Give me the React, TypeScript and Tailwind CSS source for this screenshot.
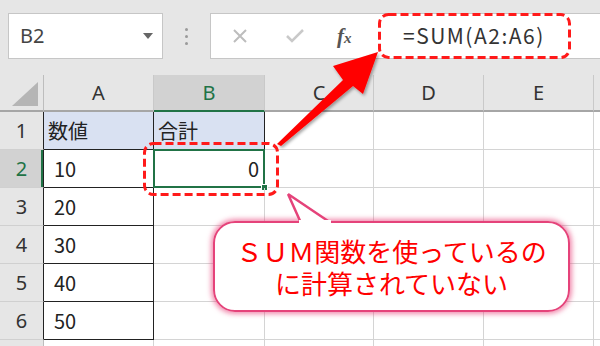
import React from "react";

const COLS = ["A", "B", "C", "D", "E"];
const WIDTHS = ["w-[110px]", "w-[111px]", "w-[109px]", "w-[110px]", "w-[110px]"];

const jp = { fontFamily: '"Noto Sans CJK JP", "Noto Sans", sans-serif' };

type Row = { n: number; a: string; b: string };

const rows: Row[] = [
  { n: 1, a: "数値", b: "合計" },
  { n: 2, a: "10", b: "0" },
  { n: 3, a: "20", b: "" },
  { n: 4, a: "30", b: "" },
  { n: 5, a: "40", b: "" },
  { n: 6, a: "50", b: "" },
  { n: 7, a: "", b: "" },
];

const Toolbar = () => (
  <div className="flex h-[75px] items-start bg-[#e6e6e6] pl-[8px] pt-[13px]">
    <div className="flex h-[46px] w-[155px] items-center justify-between border border-[#c6c6c6] bg-white pl-[11px] pr-[9px]">
      <span className="text-[20px] text-[#444]" style={{ fontFamily: '"Noto Sans", sans-serif' }}>B2</span>
      <svg width="10" height="6" viewBox="0 0 10 6">
        <path d="M0 0h10L5 6z" fill="#666" />
      </svg>
    </div>
    <div className="flex h-[46px] w-[47px] flex-col items-center justify-center gap-[4px]">
      <span className="h-[3px] w-[3px] rounded-full bg-[#9a9a9a]" />
      <span className="h-[3px] w-[3px] rounded-full bg-[#9a9a9a]" />
      <span className="h-[3px] w-[3px] rounded-full bg-[#9a9a9a]" />
    </div>
    <div className="flex h-[46px] flex-1 items-center border border-r-0 border-[#c6c6c6] bg-white">
      <div className="flex w-[168px] items-center">
        <svg className="ml-[21px]" width="16" height="16" viewBox="0 0 16 16">
          <path d="M2 2l12 12M14 2L2 14" stroke="#bdbdbd" strokeWidth="2" />
        </svg>
        <svg className="ml-[37px]" width="20" height="16" viewBox="0 0 20 16">
          <path d="M2 8l5 5L18 2" stroke="#c9c9c9" strokeWidth="2.5" fill="none" />
        </svg>
        <span
          className="ml-[32px] text-[21px] font-bold italic leading-none text-[#555]"
          style={{ fontFamily: '"Liberation Serif", serif' }}
        >
          f<span className="text-[15px]">x</span>
        </span>
      </div>
      <span className="pl-[24px] text-[21px] tracking-[1.5px] text-[#333]" style={jp}>
        =SUM(A2:A6)
      </span>
    </div>
  </div>
);

const Header = () => (
  <div className="flex h-[37px] bg-[#e6e6e6]">
    <div className="flex w-[44px] items-end justify-end border-r border-b-2 border-r-[#bdbdbd] border-b-[#a6a6a6] pb-[4px] pr-[5px]">
      <svg width="26" height="24" viewBox="0 0 26 24">
        <path d="M26 0v24H0z" fill="#b5b5b5" />
      </svg>
    </div>
    {COLS.map((c, i) => (
      <div
        key={c}
        className={`${WIDTHS[i]} flex items-center justify-center border-r border-b-2 border-r-[#c9c9c9] text-[20px] ${
          c === "B" ? "border-b-[#217346] bg-[#d2d2d2] text-[#217346]" : "border-b-[#a6a6a6] text-[#333]"
        }`}
        style={{ fontFamily: '"Noto Sans", sans-serif' }}
      >
        {c}
      </div>
    ))}
    <div className="flex-1 border-b-2 border-b-[#a6a6a6]" />
  </div>
);

const GridRow = ({ r }: { r: Row }) => {
  const sel = r.n === 2;
  const inTable = r.n <= 6;
  return (
    <div className="flex h-[38px]">
      <div
        className={`flex w-[44px] items-center justify-center border-r border-b border-b-[#d0d0d0] text-[20px] ${
          inTable ? "border-r-[#222]" : "border-r-[#bdbdbd]"
        } ${sel ? "bg-[#d2d2d2] text-[#217346] shadow-[inset_-2px_0_0_#217346]" : "bg-[#e6e6e6] text-[#333]"}`}
        style={{ fontFamily: '"Noto Sans", sans-serif' }}
      >
        {inTable ? r.n : ""}
      </div>
      <div
        className={`flex w-[110px] items-center border-r border-b text-[20px] text-[#222] ${
          inTable ? "border-r-[#222] border-b-[#222]" : "border-r-[#d4d4d4] border-b-[#d4d4d4]"
        } ${r.n === 1 ? "bg-[#d9e1f2] pl-[4px]" : "pl-[10px]"}`}
        style={jp}
      >
        {r.a}
      </div>
      <div
        className={`relative flex w-[111px] items-center border-r border-b text-[20px] text-[#222] ${
          r.n === 1 ? "border-r-[#222] border-b-[#222] bg-[#d9e1f2] pl-[4px]" : "border-r-[#d4d4d4] border-b-[#d4d4d4]"
        } ${sel ? "justify-end pr-[5px]" : ""}`}
        style={jp}
      >
        {r.b}
        {sel && (
          <>
            <div className="absolute -left-[1px] -top-[1px] bottom-[-1px] right-[-1px] border-2 border-[#217346]" />
            <div className="absolute -bottom-[4px] -right-[4px] h-[7px] w-[7px] border border-white bg-[#217346]" />
          </>
        )}
      </div>
      <div className="w-[109px] border-r border-b border-[#d4d4d4]" />
      <div className="w-[110px] border-r border-b border-[#d4d4d4]" />
      <div className="w-[110px] border-r border-b border-[#d4d4d4]" />
      <div className="flex-1 border-b border-[#d4d4d4]" />
    </div>
  );
};

const Annotations = () => (
  <svg className="pointer-events-none absolute left-0 top-0" width="600" height="346" viewBox="0 0 600 346">
    <defs>
      <filter id="sh" x="-20%" y="-20%" width="140%" height="140%">
        <feDropShadow dx="1.5" dy="2" stdDeviation="1.5" floodColor="#000" floodOpacity="0.35" />
      </filter>
    </defs>
    <rect x="379.5" y="14.5" width="190" height="43" rx="9" fill="none" stroke="#ff1a1a" strokeWidth="3" strokeDasharray="8 4" />
    <rect x="144.5" y="143.5" width="133" height="51" rx="9" fill="none" stroke="#ff1a1a" strokeWidth="3" strokeDasharray="8 4" />
    <polygon
      points="277,144 343,80 333,66 378,52 363,94 353,86 281,146"
      fill="#ff0000"
      filter="url(#sh)"
    />
  </svg>
);

const Bubble = () => (
  <div className="absolute left-[213px] top-[221px] h-[91px] w-[357px]">
    <div className="absolute inset-0 rounded-[22px] bg-white shadow-[0_0_5px_2px_rgba(232,64,120,0.6)]" />
    <svg className="absolute left-[73px] -top-[30px]" width="48" height="34" viewBox="0 0 48 34">
      <path d="M2 3 L15 32 L46 32 Z" fill="white" stroke="none" />
      <path d="M2 3 L15 32 M2 3 L45 32" stroke="#e5437a" strokeWidth="2.5" fill="none" />
      <path d="M14 31 L46 31 L46 35 L14 35 Z" fill="white" />
    </svg>
    <div className="absolute inset-0 rounded-[22px] border-[2.5px] border-[#e5437a]" />
    <div className="absolute left-[86px] top-[-1px] h-[4px] w-[32px] bg-white" />
    <div className="relative flex h-full flex-col items-center justify-center text-[26px] text-[#ff0000]" style={jp}>
      <div className="flex h-[32px] items-center leading-[32px]">ＳＵＭ関数を使っているの</div>
      <div className="flex h-[32px] items-center leading-[32px]">に計算されていない</div>
    </div>
  </div>
);

export default function App() {
  return (
    <div className="relative h-[346px] w-[600px] overflow-hidden bg-white">
      <Toolbar />
      <Header />
      {rows.map((r) => (
        <GridRow key={r.n} r={r} />
      ))}
      <Annotations />
      <Bubble />
    </div>
  );
}
